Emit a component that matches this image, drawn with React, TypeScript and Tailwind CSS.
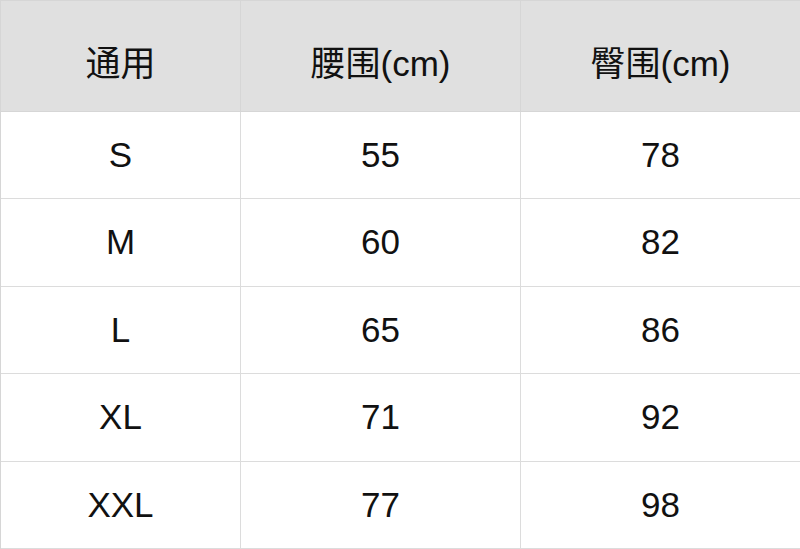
const rows = [
  ["S", "55", "78"],
  ["M", "60", "82"],
  ["L", "65", "86"],
  ["XL", "71", "92"],
  ["XXL", "77", "98"],
];

const headers = ["通用", "腰围(cm)", "臀围(cm)"];

export default function App() {
  return (
    <div
      className="grid h-[549px] w-[800px] grid-cols-[240px_280px_280px] grid-rows-[111px_repeat(5,1fr)] border-l border-t border-[#d6d6d6] bg-white text-[35px] text-[#111]"
      style={{ fontFamily: '"Liberation Sans", "Noto Sans CJK SC", sans-serif' }}
    >
      {headers.map((h) => (
        <div
          key={h}
          className="flex items-center justify-center border-b border-r border-[#d6d6d6] bg-[#e0e0e0] pt-4"
        >
          {h}
        </div>
      ))}
      {rows.map((r) =>
        r.map((cell, i) => (
          <div
            key={r[0] + i}
            className="flex items-center justify-center border-b border-r border-[#dcdcdc]"
          >
            {cell}
          </div>
        ))
      )}
    </div>
  );
}
